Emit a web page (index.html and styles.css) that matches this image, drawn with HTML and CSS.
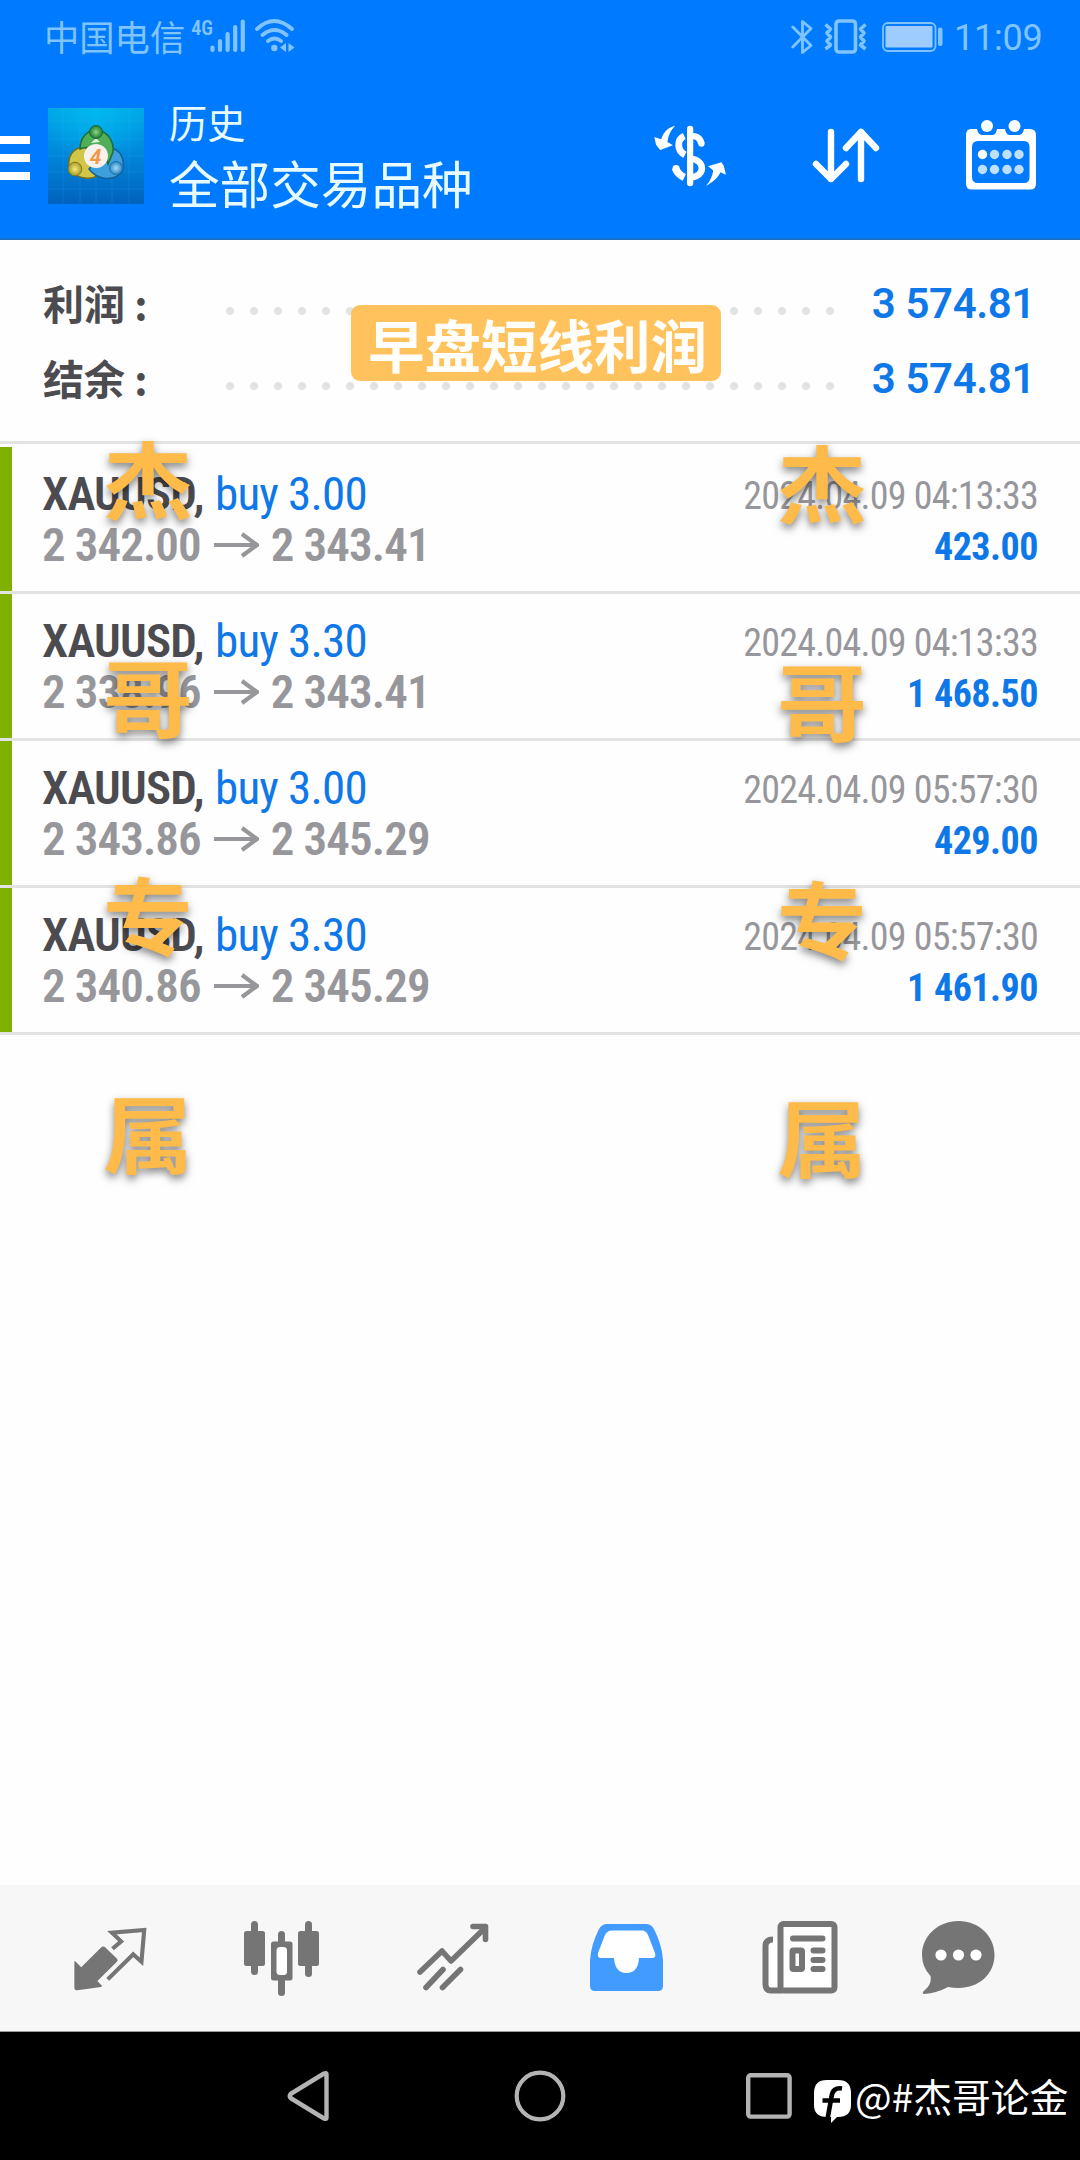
FILE: index.html
```html
<!DOCTYPE html>
<html lang="zh-CN">
<head>
<meta charset="utf-8">
<title>历史</title>
<link rel="stylesheet" href="styles.css">
</head>
<body>
<div class="screen">
  <header class="top">
    <div class="status">
      <span class="carrier">中国电信</span>
      <span class="net">4G</span>
      <svg class="signal" width="36" height="34" viewBox="0 0 36 34" stroke="currentColor" stroke-width="4.2" stroke-linecap="round"><path d="M2.5 28.500V31M10 22V31M17.600 15V31M25.200 8V31M32.800 2.500V31"/></svg>
      <svg class="wifi" width="40" height="35" viewBox="0 0 40 35" fill="none" stroke="currentColor" stroke-width="3.800" stroke-linecap="round"><path d="M2 10Q19 -6 37 10M7.500 16Q19.500 6 31.500 16M13 22Q19.500 17 26 22"/><circle cx="19.300" cy="29" r="3.200" fill="currentColor" stroke="none"/><path fill="currentColor" stroke="none" d="M25 28.500l6-4.500v9zM39.500 28.500l-6-4.500v9z"/></svg>
      <span class="spacer"></span>
      <svg class="bt" width="22" height="36" viewBox="0 0 22 36" fill="none" stroke="currentColor" stroke-width="2.800" stroke-linejoin="round" stroke-linecap="round"><path d="M1.800 8L20 26.500L11.500 33.500V2.500L20 9.500L1.800 28"/></svg>
      <svg class="vib" width="43" height="35" viewBox="0 0 43 35" fill="none" stroke="currentColor" stroke-width="3.600" stroke-linejoin="round"><rect x="12" y="2" width="19.500" height="31" rx="3"/><path stroke-width="3.600" d="M1.500 5.500l5 4.500l-3.500 4l3.500 4l-3.500 4l3.500 4l-5 4M41.500 5.500l-5 4.500l3.500 4l-3.500 4l3.500 4l-3.500 4l5 4"/></svg>
      <svg class="batt" width="62" height="30" viewBox="0 0 62 30"><rect x="1" y="1" width="52.500" height="28" rx="5" fill="none" stroke="currentColor" stroke-width="1.800"/><rect x="3.500" y="4" width="47" height="21.500" rx="1" fill="#9fccff"/><rect x="56" y="5.500" width="4.500" height="18.500" rx="2" fill="currentColor"/></svg>
      <span class="clock">11:09</span>
    </div>
    <div class="appbar">
      <div class="burger"><i></i><i></i><i></i></div>
      <svg class="logo" width="96" height="96" viewBox="0 0 96 96">
        <defs>
          <linearGradient id="lb" x1="0" y1="0" x2="0" y2="1"><stop offset="0" stop-color="#00a6e6"/><stop offset=".45" stop-color="#0089dc"/><stop offset="1" stop-color="#0062bd"/></linearGradient>
          <radialGradient id="lg" cx=".5" cy="0" r=".6"><stop offset="0" stop-color="#00bdf2" stop-opacity=".8"/><stop offset="1" stop-color="#00bdf2" stop-opacity="0"/></radialGradient>
          <radialGradient id="g1"><stop offset="0" stop-color="#8bd67a"/><stop offset="1" stop-color="#1f7a3a"/></radialGradient>
          <radialGradient id="g2"><stop offset="0" stop-color="#f3ea7c"/><stop offset="1" stop-color="#a8992a"/></radialGradient>
          <radialGradient id="g3"><stop offset="0" stop-color="#a6dcfa"/><stop offset="1" stop-color="#2a86c4"/></radialGradient>
        </defs>
        <rect width="96" height="96" fill="url(#lb)"/><rect width="96" height="96" fill="url(#lg)"/>
        <path d="M0 13H96M0 31H96M0 48H96M0 64H96M0 81H96M15 0V96M32 0V96M48 0V96M64 0V96M81 0V96" stroke="#4cc3f2" stroke-opacity=".15" fill="none"/>
        <path d="M21 62C19 47 26 39 37 39L46 52L52 66C43 73 31 71 21 62Z" fill="#d3c646" stroke="#75701f" stroke-width="1.500"/>
        <path d="M41 61L60 39C72 41 78 50 74 64C66 73 50 73 41 61Z" fill="#3d9fdc" stroke="#175f97" stroke-width="1.500"/>
        <path d="M32 41C32 29 40 22 48 22C59 23 66 32 65 44L60 56C57 42 43 37 32 41Z" fill="#4fae57" stroke="#1f6d34" stroke-width="1.500"/>
        <path d="M52 34l-4-4-5 5z" fill="#dff2d8"/>
        <circle cx="48" cy="24" r="6.500" fill="url(#g1)" stroke="#1d6a35"/><circle cx="27" cy="61" r="6.800" fill="url(#g2)" stroke="#83791f"/><circle cx="68" cy="60" r="6.500" fill="url(#g3)" stroke="#236fa6"/>
        <circle cx="48" cy="48" r="12" fill="#f7f1ee"/>
        <text x="47.500" y="55.500" text-anchor="middle" font-family="Roboto, sans-serif" font-size="21" font-weight="700" font-style="italic" fill="#ef9a4a">4</text>
      </svg>
      <div class="titles"><div class="sub">历史</div><div class="main">全部交易品种</div></div>
      <svg class="ic-dollar" width="74" height="64" viewBox="0 0 215 192" preserveAspectRatio="none" fill="none" stroke="#fff">
        <path d="M61 6C42 9 27 24 21 46L1 39L6 62L18 78L55 64L39 54C42 34 48 20 61 6ZM151 186C172 174 187 160 193 145L209 152L203 126L196 115L157 127L172 139C170 158 162 173 151 186Z" fill="#fff" stroke="none"/>
        <path d="M88 36C66 46 66 80 90 92" stroke-width="20"/><path d="M62 132C67 146 75 154 88 160" stroke-width="22" /><circle cx="64" cy="133" r="10" fill="#fff" stroke="none"/>
        <path d="M106 38C122 33 134 42 138 59M106 104C150 108 150 158 106 160" stroke-width="19"/><circle cx="138" cy="59" r="9" fill="#fff" stroke="none"/>
        <path d="M105 14V178" stroke-width="18" stroke-linecap="round"/>
      </svg>
      <svg class="ic-sort" width="68" height="56" viewBox="0 0 68 56" fill="none" stroke="#fff" stroke-width="6.400" stroke-linecap="round" stroke-linejoin="round"><path d="M19 4V51M4 36L19 51L34 36M49 51V4M34 20L49 4L64 20"/></svg>
      <svg class="ic-cal" width="70" height="70" viewBox="0 0 70 70">
        <path fill="#fff" fill-rule="evenodd" d="M5 9H11Q12 15 17 15H26Q30 15 31 9H39Q40 15 44 15H52Q57 15 58 9H64Q70 9 70 15V64Q70 69.500 64 69.500H6Q0 69.500 0 64V15Q0 9 5 9ZM12 21Q6 21 6 27V57Q6 63 12 63H58Q63.500 63 63.500 57V27Q63.500 21 58 21Z"/>
        <circle cx="21" cy="6" r="6" fill="#fff"/><circle cx="48.500" cy="6" r="6" fill="#fff"/>
        <g fill="#bfdfff"><circle cx="16.500" cy="34.500" r="4.700" fill="#fff"/><circle cx="28.500" cy="34.500" r="4.700"/><circle cx="41" cy="34.500" r="4.700"/><circle cx="53" cy="34.500" r="4.700"/><circle cx="16.500" cy="49.500" r="4.700"/><circle cx="28.500" cy="49.500" r="4.700"/><circle cx="41" cy="49.500" r="4.700"/><circle cx="53" cy="49.500" r="4.700"/></g>
      </svg>
    </div>
  </header>

  <section class="summary">
    <div class="sum-row"><span class="lbl">利润 :</span><span class="dots"></span><span class="amt">3 574.81</span></div>
    <div class="sum-row"><span class="lbl">结余 :</span><span class="dots"></span><span class="amt">3 574.81</span></div>
    <div class="badge">早盘短线利润</div>
  </section>

  <main class="trades">
    <article class="trade">
      <div class="l"><div class="line"><b>XAUUSD,</b> <span class="buy">buy 3.00</span></div><div class="line price"><span>2 342.00</span><svg class="arrow" viewBox="0 0 45 26"><path d="M0 13H43M28 2L43 13L28 24"/></svg><span>2 343.41</span></div></div>
      <div class="r"><div class="date">2024.04.09 04:13:33</div><div class="gain">423.00</div></div>
    </article>
    <article class="trade">
      <div class="l"><div class="line"><b>XAUUSD,</b> <span class="buy">buy 3.30</span></div><div class="line price"><span>2 338.96</span><svg class="arrow" viewBox="0 0 45 26"><path d="M0 13H43M28 2L43 13L28 24"/></svg><span>2 343.41</span></div></div>
      <div class="r"><div class="date">2024.04.09 04:13:33</div><div class="gain">1 468.50</div></div>
    </article>
    <article class="trade">
      <div class="l"><div class="line"><b>XAUUSD,</b> <span class="buy">buy 3.00</span></div><div class="line price"><span>2 343.86</span><svg class="arrow" viewBox="0 0 45 26"><path d="M0 13H43M28 2L43 13L28 24"/></svg><span>2 345.29</span></div></div>
      <div class="r"><div class="date">2024.04.09 05:57:30</div><div class="gain">429.00</div></div>
    </article>
    <article class="trade">
      <div class="l"><div class="line"><b>XAUUSD,</b> <span class="buy">buy 3.30</span></div><div class="line price"><span>2 340.86</span><svg class="arrow" viewBox="0 0 45 26"><path d="M0 13H43M28 2L43 13L28 24"/></svg><span>2 345.29</span></div></div>
      <div class="r"><div class="date">2024.04.09 05:57:30</div><div class="gain">1 461.90</div></div>
    </article>
  </main>

  <nav class="tabs">
    <svg class="t1" width="74" height="66" viewBox="0 0 215 198" preserveAspectRatio="none">
      <path fill="#757575" d="M1 106Q4 104 8 110L21 124L78 65Q85 58 92 65L125 98Q129 103 124 108L68 165L81 179Q82 182 78 183L10 193Q1 194 1 186Z"/>
      <path fill="none" stroke="#757575" stroke-width="12" d="M112 68L137 46L110 20L204 12L196 107L172 85L98 160"/>
    </svg>
    <svg class="t2" width="75" height="75" viewBox="0 0 75 75" fill="#757575"><rect x="0" y="10" width="21" height="35" rx="2.500"/><rect x="7" y="0" width="7" height="54" rx="3.500"/><rect x="54" y="10" width="21" height="35" rx="2.500"/><rect x="61" y="0" width="7" height="56" rx="3.500"/><rect x="34" y="10" width="7" height="14" rx="3.500"/><rect x="34" y="56" width="7" height="19" rx="3.500"/><path fill-rule="evenodd" d="M29.500 20.500H46Q48.500 20.500 48.500 23V57Q48.500 59.500 46 59.500H29.500Q27 59.500 27 57V23Q27 20.500 29.500 20.500Z"/><rect x="32.500" y="26" width="10.500" height="28" rx="3.500" fill="#fff"/></svg>
    <svg class="t3" width="72" height="68" viewBox="0 0 72 68" fill="none" stroke="#757575" stroke-width="5.600" stroke-linecap="round" stroke-linejoin="round"><path d="M3 49L25 28L34 38L68 5M56 3.500H68.500V16.500M9 64.500L26 46.500M25.500 64.500L43.500 46.500"/></svg>
    <svg class="t4" width="73" height="67" viewBox="0 0 73 67"><path fill="#429cff" fill-rule="evenodd" d="M17 0H56Q61 0 64 5Q72 21 73 36V62Q73 67 68 67H5Q0 67 0 62V36Q1 21 9 5Q12 0 17 0Z"/><path fill="#fff" d="M22 6.500H52Q56 6.500 58 11L65 29Q66.500 34 62 34H49Q48 49 36.500 49Q25 49 24 34H11Q7 34 8 29L15 11Q17 6.500 22 6.500Z"/></svg>
    <svg class="t5" width="76" height="73" viewBox="0 0 76 73" fill="none" stroke="#757575"><path fill="#fff" stroke="none" d="M4 18H18V68H4Z"/><path stroke-width="6" d="M11 18.500Q3.500 18.500 3.500 25V63Q3.500 69.500 9 69.500H20"/><rect x="18.500" y="3" width="54" height="66.500" rx="3" fill="#fff" stroke-width="6"/><path stroke-width="6" stroke-linecap="round" d="M31 17.500H60.500M51.500 29.500H60.500M51.500 39H60.500M51.500 48H60.500"/><rect x="30.500" y="29.500" width="9.500" height="18.500" rx="1" stroke-width="6"/></svg>
    <svg class="t6" width="73" height="73" viewBox="0 0 73 73"><path fill="#757575" d="M36.500 0C57 0 72.500 15 72.500 34S57 67 36.500 67Q31 67 26 66Q15 72 2 73Q-1 72 3 69Q10 63 8.500 55Q0 46 0 34C0 15 16 0 36.500 0Z"/><g fill="#fff"><circle cx="19" cy="34" r="5.600"/><circle cx="36.500" cy="34" r="5.600"/><circle cx="54" cy="34" r="5.600"/></g></svg>
  </nav>

  <footer class="sysnav">
    <svg class="n1" width="44" height="52" viewBox="0 0 44 52" fill="none" stroke="#b3b3b3" stroke-width="4.400" stroke-linejoin="round"><path d="M39.500 4V48Q39.500 49.500 37 48.500L3.500 28Q2 26 3.500 24L37 3.500Q39.500 2.500 39.500 4Z"/></svg>
    <svg class="n2" width="52" height="52" viewBox="0 0 52 52" fill="none" stroke="#b3b3b3" stroke-width="4.200"><circle cx="26" cy="26" r="23.300"/></svg>
    <svg class="n3" width="46" height="46" viewBox="0 0 46 46" fill="none" stroke="#b3b3b3" stroke-width="4.400"><rect x="2.200" y="2.200" width="41.400" height="41.400" rx="2.500"/></svg>
    <svg class="n4" width="37" height="43" viewBox="0 0 37 43"><path fill="#fff" d="M13 0H24Q37 0 37 13V25Q37 37 24 37H23L17 43V37H13Q0 37 0 25V13Q0 0 13 0Z"/><path d="M28 8.500Q18.500 7 17.500 17L13.500 39M8.500 20.500H26" fill="none" stroke="#000" stroke-width="4.600"/></svg>
    <span class="author">@#杰哥论金</span>
  </footer>

  <div class="wm wm-a"><span>杰</span><span>哥</span><span>专</span><span>属</span></div>
  <div class="wm wm-b"><span>杰</span><span>哥</span><span>专</span><span>属</span></div>
</div>
</body>
</html>
```
FILE: styles.css
```css
* { box-sizing: border-box; margin: 0; padding: 0; }
body { background: #fff; font-family: Roboto, "Noto Sans CJK SC", sans-serif; }
svg { display: block; flex: none; }
.screen { position: relative; width: 1080px; height: 2160px; display: flex; flex-direction: column; overflow: hidden; background: #fefefe; }

.top { height: 240px; background: #007aff; border-bottom: 2px solid #1a6fc8; }
.status { display: flex; align-items: flex-start; height: 72px; padding: 0 36px 0 44px; color: #80c4ff; }
.carrier { font: 400 35.3px/40px "Noto Sans CJK SC", sans-serif; margin-top: 16px; white-space: nowrap; }
.net { width: 20px; margin: 18px 0 0 6px; font: 600 20px/20px "Roboto Condensed", Roboto, sans-serif; }
.signal { margin-top: 19px; margin-left: -1px; }
.wifi { margin: 19px 0 0 9px; }
.spacer { flex: 1; }
.bt { margin-top: 19px; }
.vib { margin: 19px 0 0 11px; }
.batt { margin: 22px 0 0 15px; }
.clock { width: 90px; margin: 16px 0 0 10px; font-size: 36px; line-height: 44px; letter-spacing: -.2px; white-space: nowrap; }

.appbar { display: flex; align-items: flex-start; height: 166px; }
.burger { display: flex; flex-direction: column; gap: 10px; width: 30px; padding-top: 64px; }
.burger i { height: 8px; background: #fff; }
.logo { margin: 36px 0 0 18px; }
.titles { width: 330px; margin: 27px 0 0 25px; color: #e6faff; font-family: "Noto Sans CJK SC", sans-serif; font-weight: 400; white-space: nowrap; }
.sub { font-size: 38.2px; line-height: 46px; }
.main { font-size: 50.6px; line-height: 60px; margin-top: 7px; }
.ic-dollar { margin: 52px 0 0 155px; }
.ic-sort { margin: 56px 0 0 84px; }
.ic-cal { margin: 48px 0 0 86px; }

.summary { position: relative; height: 204px; padding: 26px 45px 0 43px; border-bottom: 3px solid #e3e3e3; }
.sum-row { display: flex; align-items: center; height: 75px; }
.lbl { width: 183px; margin-top: -3px; font: 700 41px/75px "Noto Sans CJK SC", sans-serif; color: #4b4b50; white-space: nowrap; }
.dots { width: 624px; height: 8px; margin-top: 14px; background: radial-gradient(circle at 4px 4px, #e3e3e3 3.600px, transparent 4.400px) 0 0 / 24px 8px; }
.amt { flex: 1; text-align: right; font-size: 42px; font-weight: 600; letter-spacing: -.4px; color: #0f78e8; white-space: nowrap; }
.badge { position: absolute; left: 351px; top: 65px; width: 370px; height: 76px; padding-left: 3px; border-radius: 9px; background: rgba(255,191,86,.96); color: #fffefa; text-align: center; font: 700 56.500px/76px "Noto Sans CJK SC", sans-serif; white-space: nowrap; }

.trades { flex: 1; padding-top: 3px; }
.trade { display: flex; justify-content: space-between; height: 147px; padding: 21px 42px 0 42px; background: linear-gradient(#80b000, #80b000) 0 0 / 12px 144px no-repeat; border-bottom: 3px solid #e3e3e3; font-family: "Roboto Condensed", Roboto, sans-serif; white-space: nowrap; }
.line { display: flex; align-items: center; height: 51px; font-size: 47px; line-height: 51px; letter-spacing: -.8px; color: #4b4b50; }
.line b { width: 173px; font-weight: 600; }
.buy { color: #0f78e8; }
.price { color: #97979b; font-weight: 600; letter-spacing: -.9px; }
.arrow { width: 45px; height: 26px; margin: 0 12px 0 13px; fill: none; stroke: #97979b; stroke-width: 4.200; }
.r { padding-top: 3px; text-align: right; font-size: 38px; line-height: 51px; }
.date { color: #97979b; letter-spacing: -.75px; }
.gain { color: #0f78e8; font-weight: 700; letter-spacing: -.5px; }

.tabs { display: flex; align-items: flex-start; height: 147px; padding-left: 74px; background: #f7f7f7; border-bottom: 1px solid #999; }
.t1 { margin-top: 41px; }
.t2 { margin: 36px 0 0 96px; }
.t3 { margin: 38px 0 0 98px; }
.t4 { margin: 39px 0 0 101px; }
.t5 { margin: 36px 0 0 99px; }
.t6 { margin: 36px 0 0 84px; }

.sysnav { display: flex; align-items: flex-start; height: 128px; padding-left: 287px; background: #000; }
.n1 { margin-top: 38px; }
.n2 { margin: 38px 0 0 183px; }
.n3 { margin: 41px 0 0 180px; }
.n4 { margin: 48px 0 0 22px; }
.author { margin: 39px 0 0 4px; color: #fff; font: 400 38.8px/48px "Noto Sans CJK SC", sans-serif; white-space: nowrap; }

.wm { position: absolute; display: flex; flex-direction: column; color: #ffbb4a; font: 700 90px/218px "Noto Sans CJK SC", sans-serif; text-shadow: 0 5px 9px rgba(0,0,0,.5); }
.wm span { height: 218px; transform: scaleY(.94); }
.wm-a { left: 103px; top: 367px; }
.wm-b { left: 777px; top: 371px; }
```
